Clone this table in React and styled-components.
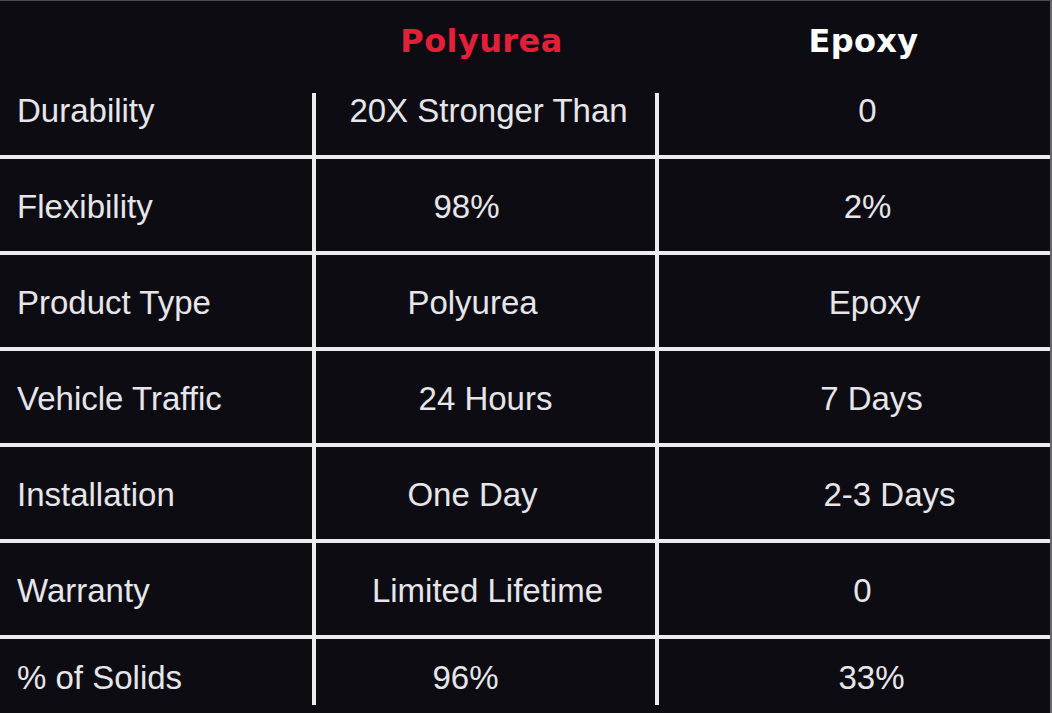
import React from "react";
import styled, { createGlobalStyle } from "styled-components";

const Global = createGlobalStyle`
  html, body { margin: 0; padding: 0; background: #0d0c13; }
  body { font-family: "Liberation Sans", Arial, sans-serif; }
`;

const Page = styled.div`
  width: 1050px;
  height: 712px;
  background: #0d0c13;
  border-top: 1px solid #4d4c53;
  border-right: 2px solid #6a696f;
  display: flex;
  flex-direction: column;
  overflow: hidden;
`;

const Row = styled.div`
  display: grid;
  grid-template-columns: 312px 343px 1fr;
  height: ${(p) => p.$h}px;
  border-top: ${(p) => (p.$line ? "4px solid #ececf0" : "none")};
  box-sizing: content-box;
  flex: none;
`;

const HeadCell = styled.div`
  display: flex;
  align-items: center;
  justify-content: center;
  padding: 18px ${(p) => (p.$dx < 0 ? -p.$dx * 2 : 0)}px 0
    ${(p) => (p.$dx > 0 ? p.$dx * 2 : 0)}px;
  font-family: "DejaVu Sans", Verdana, sans-serif;
  font-weight: 700;
  font-size: 32px;
  letter-spacing: 0.4px;
  color: ${(p) => p.$color};
`;

const LabelCell = styled.div`
  display: flex;
  align-items: center;
  padding: 4px 0 0 17px;
  font-size: 33px;
  color: #e6e6ea;
  white-space: nowrap;
`;

const ValueCell = styled.div`
  position: relative;
  display: flex;
  align-items: center;
  justify-content: center;
  padding: 4px ${(p) => (p.$dx < 0 ? -p.$dx * 2 : 0)}px 0
    ${(p) => (p.$dx > 0 ? p.$dx * 2 + 4 : 4)}px;
  font-size: 33px;
  color: #e6e6ea;
  white-space: nowrap;

  &::before {
    content: "";
    position: absolute;
    left: 0;
    width: 4px;
    top: ${(p) => p.$lineTop}px;
    bottom: ${(p) => p.$lineBottom}px;
    background: #ececf0;
  }
`;

const rows = [
  { label: "Durability", a: "20X Stronger Than", ax: 3, b: "0", bx: 13 },
  { label: "Flexibility", a: "98%", ax: -19, b: "2%", bx: 13 },
  { label: "Product Type", a: "Polyurea", ax: -13, b: "Epoxy", bx: 20 },
  { label: "Vehicle Traffic", a: "24 Hours", ax: 0, b: "7 Days", bx: 17 },
  { label: "Installation", a: "One Day", ax: -13, b: "2-3 Days", bx: 35 },
  { label: "Warranty", a: "Limited Lifetime", ax: 2, b: "0", bx: 8 },
  { label: "% of Solids", a: "96%", ax: -20, b: "33%", bx: 17 },
];

export default function App() {
  return (
    <>
      <Global />
      <Page>
        <Row $h={62}>
          <div />
          <HeadCell $color="#e2203a" $dx={-2}>Polyurea</HeadCell>
          <HeadCell $color="#ffffff" $dx={11}>Epoxy</HeadCell>
        </Row>
        {rows.map((r, i) => {
          const first = i === 0;
          const last = i === rows.length - 1;
          const h = last ? 74 : 92;
          const lineTop = first ? 30 : -4;
          const lineBottom = last ? 8 : 0;
          return (
            <Row key={r.label} $h={h} $line={!first}>
              <LabelCell>{r.label}</LabelCell>
              <ValueCell $dx={r.ax} $lineTop={lineTop} $lineBottom={lineBottom}>
                {r.a}
              </ValueCell>
              <ValueCell $dx={r.bx} $lineTop={lineTop} $lineBottom={lineBottom}>
                {r.b}
              </ValueCell>
            </Row>
          );
        })}
      </Page>
    </>
  );
}
